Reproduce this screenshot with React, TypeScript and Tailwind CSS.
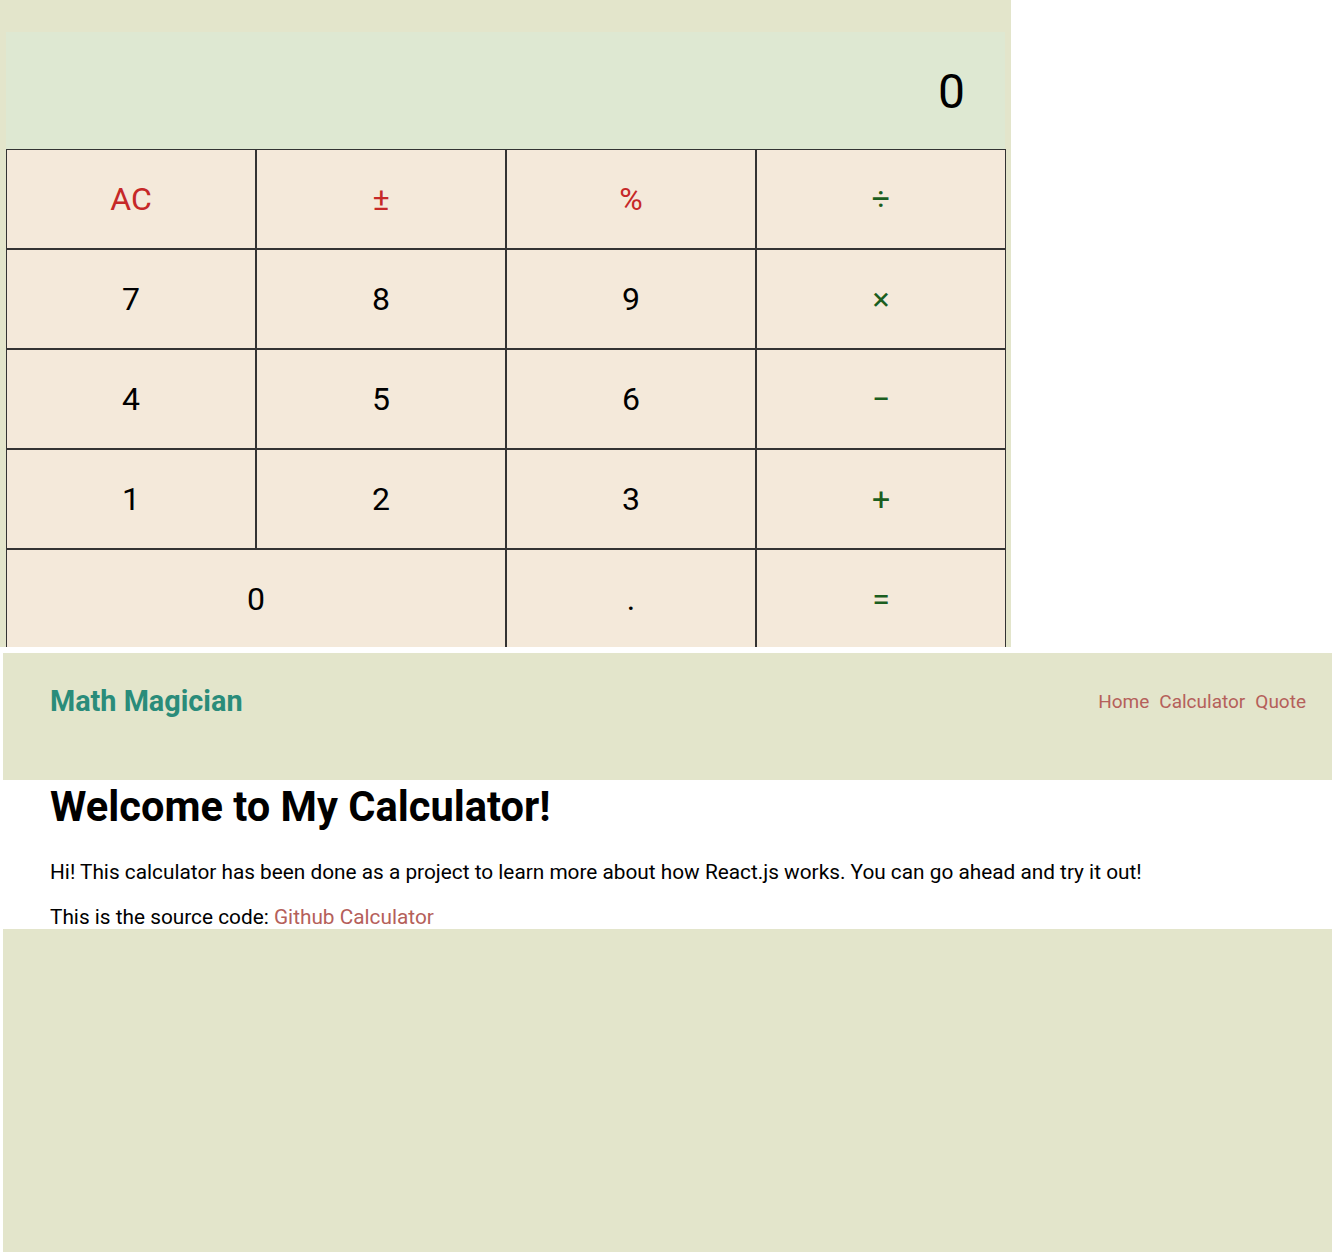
import { useState } from 'react'

type Key = { label: string; tone: 'fn' | 'num' | 'op'; wide?: boolean }

const keys: Key[] = [
  { label: 'AC', tone: 'fn' },
  { label: '±', tone: 'fn' },
  { label: '%', tone: 'fn' },
  { label: '÷', tone: 'op' },
  { label: '7', tone: 'num' },
  { label: '8', tone: 'num' },
  { label: '9', tone: 'num' },
  { label: '×', tone: 'op' },
  { label: '4', tone: 'num' },
  { label: '5', tone: 'num' },
  { label: '6', tone: 'num' },
  { label: '−', tone: 'op' },
  { label: '1', tone: 'num' },
  { label: '2', tone: 'num' },
  { label: '3', tone: 'num' },
  { label: '+', tone: 'op' },
  { label: '0', tone: 'num', wide: true },
  { label: '.', tone: 'num' },
  { label: '=', tone: 'op' },
]

const toneCls = {
  fn: 'text-[#c62828]',
  num: 'text-black',
  op: 'text-[#1b5e20]',
}

const Calculator = () => {
  const [display] = useState('0')

  return (
    <div className="w-[1011px] h-[647px] overflow-hidden bg-[#e3e5cb] pl-[6px] pt-[32px]">
      <div className="w-[999px] h-[117px] bg-[#dee8d2] flex items-center justify-end pr-[40px] pt-[2px] text-[48px] text-black">
        {display}
      </div>
      <div className="grid grid-cols-4 w-[1000px]">
        {keys.map((k) => (
          <button
            key={k.label}
            type="button"
            className={`h-[100px] border border-[#333] bg-[#f4e9da] text-[32px] ${toneCls[k.tone]} ${k.wide ? 'col-span-2' : ''}`}
          >
            {k.label}
          </button>
        ))}
      </div>
    </div>
  )
}

const App = () => {
  return (
    <div className="font-['Roboto',sans-serif] bg-white min-h-[1252px]">
      <Calculator />
      <div className="ml-[3px] mt-[6px]">
        <nav className="h-[127px] bg-[#e3e5cb] flex items-center justify-between pl-[47px] pr-[26px] pb-[29px]">
          <h1 className="text-[28.8px] font-bold text-[#2a8c7a]">Math Magician</h1>
          <ul className="flex gap-[10px] text-[19px] text-[#b5605a]">
            <li>Home</li>
            <li>Calculator</li>
            <li>Quote</li>
          </ul>
        </nav>
        <main className="h-[149px] bg-white pl-[47px]">
          <h2 className="text-[41.6px] font-bold leading-[54px] text-black">Welcome to My Calculator!</h2>
          <p className="mt-[26px] text-[20.8px] leading-[24px] text-black">
            Hi! This calculator has been done as a project to learn more about how React.js works. You can go ahead and try it out!
          </p>
          <p className="mt-[21px] text-[20.8px] leading-[24px] text-black">
            This is the source code: <a className="text-[#b5605a]">Github Calculator</a>
          </p>
        </main>
        <footer className="h-[323px] bg-[#e3e5cb]" />
      </div>
    </div>
  )
}

export default App
